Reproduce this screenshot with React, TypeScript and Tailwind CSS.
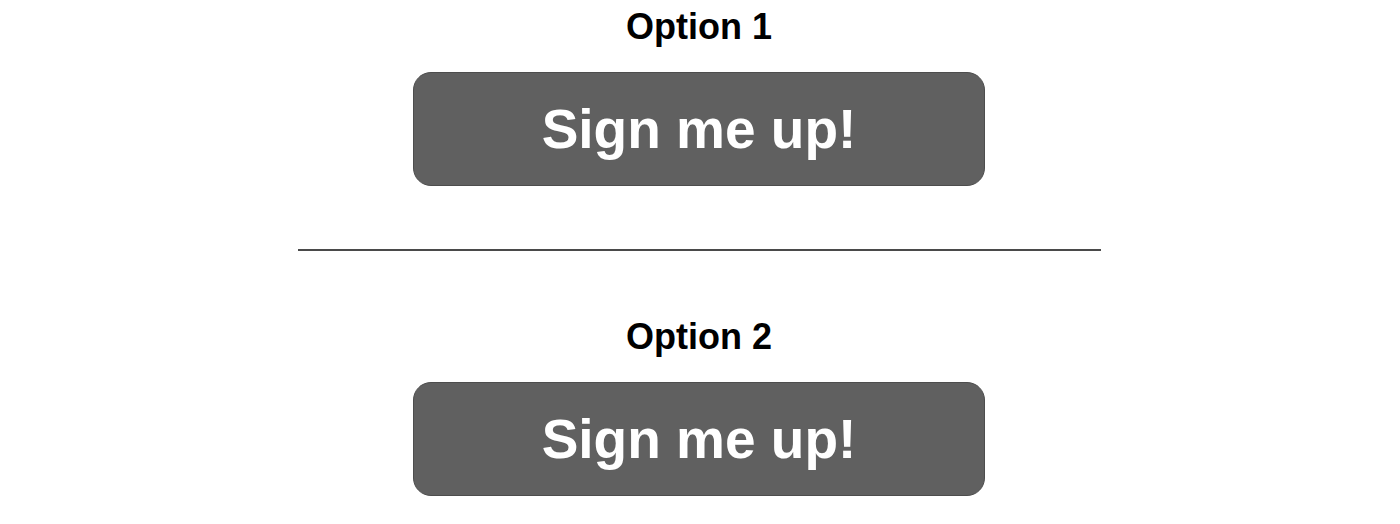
export default function App() {
  const Option = ({ label }: { label: string }) => (
    <div className="flex flex-col items-center">
      <h2 className="text-[36px] leading-none font-bold text-black">{label}</h2>
      <button className="mt-[27px] w-[572px] h-[114px] rounded-[18px] bg-[#606060] border border-[#4d4d4d] text-white text-[55px] font-bold leading-none flex items-center justify-center">
        Sign me up!
      </button>
    </div>
  );

  return (
    <div
      className="w-[1400px] h-[524px] bg-white flex flex-col items-center pt-[9px] pr-[2px]"
      style={{ fontFamily: '"Liberation Sans", Arial, sans-serif' }}
    >
      <Option label="Option 1" />
      <div className="mt-[63px] w-[803px] h-[2px] bg-[#4a4a4a]" />
      <div className="mt-[68px]">
        <Option label="Option 2" />
      </div>
    </div>
  );
}
